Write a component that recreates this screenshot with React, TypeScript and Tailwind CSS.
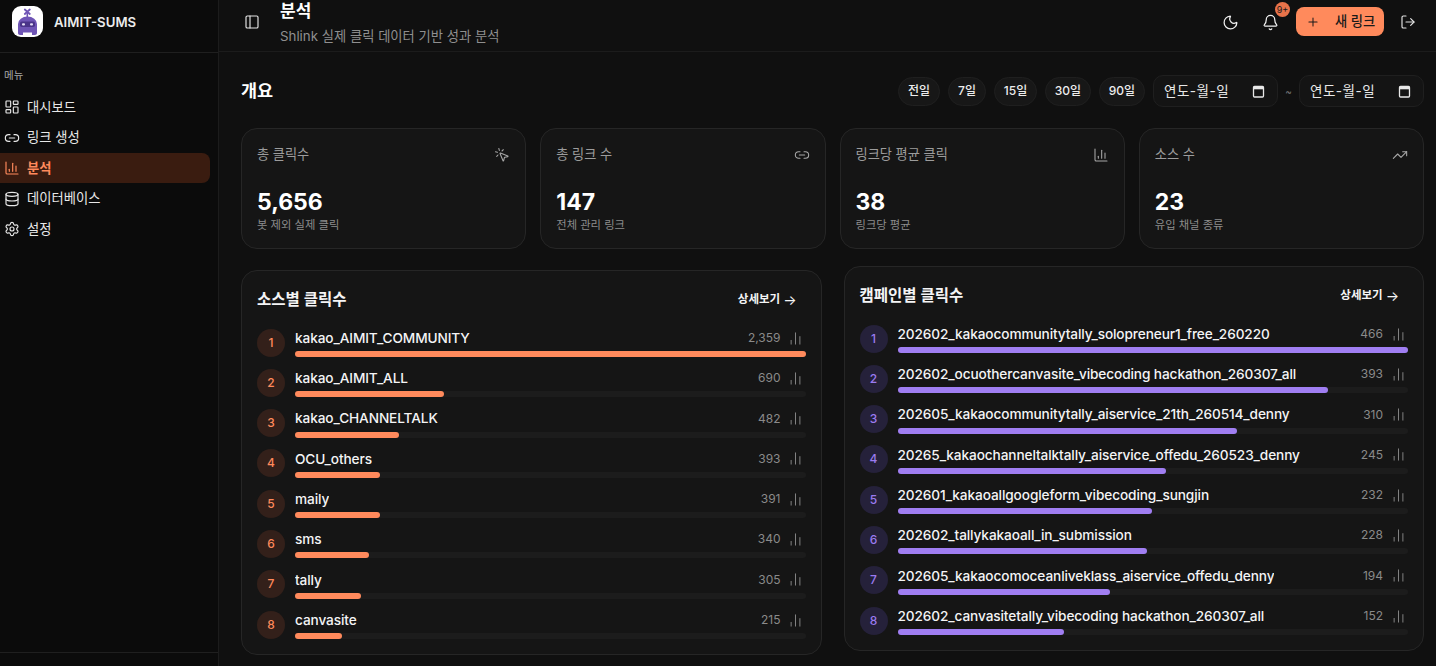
import React from "react";
import { LayoutDashboard, Link2, ChartColumn, Database, Settings, PanelLeft, Moon, Bell, Plus, LogOut, MousePointerClick, TrendingUp, ChartNoAxesColumn } from "lucide-react";

const nav = [
  { label: "대시보드", icon: LayoutDashboard },
  { label: "링크 생성", icon: Link2 },
  { label: "분석", icon: ChartColumn, active: true },
  { label: "데이터베이스", icon: Database },
  { label: "설정", icon: Settings },
];

const stats = [
  { title: "총 클릭수", value: "5,656", sub: "봇 제외 실제 클릭", icon: MousePointerClick },
  { title: "총 링크 수", value: "147", sub: "전체 관리 링크", icon: Link2 },
  { title: "링크당 평균 클릭", value: "38", sub: "링크당 평균", icon: ChartColumn },
  { title: "소스 수", value: "23", sub: "유입 채널 종류", icon: TrendingUp },
];

const sources: [string, number][] = [
  ["kakao_AIMIT_COMMUNITY", 2359],
  ["kakao_AIMIT_ALL", 690],
  ["kakao_CHANNELTALK", 482],
  ["OCU_others", 393],
  ["maily", 391],
  ["sms", 340],
  ["tally", 305],
  ["canvasite", 215],
];

const campaigns: [string, number][] = [
  ["202602_kakaocommunitytally_solopreneur1_free_260220", 466],
  ["202602_ocuothercanvasite_vibecoding hackathon_260307_all", 393],
  ["202605_kakaocommunitytally_aiservice_21th_260514_denny", 310],
  ["20265_kakaochanneltalktally_aiservice_offedu_260523_denny", 245],
  ["202601_kakaoallgoogleform_vibecoding_sungjin", 232],
  ["202602_tallykakaoall_in_submission", 228],
  ["202605_kakaocomoceanliveklass_aiservice_offedu_denny", 194],
  ["202602_canvasitetally_vibecoding hackathon_260307_all", 152],
];

function Logo() {
  return (
    <div className="w-[31px] h-[31px] rounded-[9px] bg-white shrink-0">
      <svg width="31" height="31" viewBox="0 0 31 31">
        <path d="M12.800 3.500l5 4.500M17.800 3.500l-5 4.500" stroke="#6f55b5" strokeWidth="1.800" strokeLinecap="round" />
        <rect x="14.500" y="7" width="1.600" height="4" fill="#6f55b5" />
        <path d="M6 18a9.500 7.500 0 0 1 19 0v9c0 1.200-.8 2-2 2h-3v-2.500h-9V29H8c-1.200 0-2-.8-2-2z" fill="#6f55b5" />
        <rect x="8" y="15.500" width="15" height="5.500" rx="1.800" fill="#4a3489" />
        <rect x="10" y="17.200" width="3" height="2.200" rx="1" fill="#e6e0f7" />
        <rect x="18" y="17.200" width="3" height="2.200" rx="1" fill="#e6e0f7" />
      </svg>
    </div>
  );
}

function RankList({ rows, accent }: { rows: [string, number][]; accent: "orange" | "purple" }) {
  const max = rows[0][1];
  const isOrange = accent === "orange";
  return (
    <div className="flex flex-col gap-[10.300px]">
      {rows.map(([name, v], i) => (
        <div key={name} className="flex items-center gap-[10px]">
          <div className={`w-[28px] h-[28px] rounded-full flex items-center justify-center text-[12px] font-medium shrink-0 mt-[1px] ${isOrange ? "bg-[#33201a] text-[#ff8a5c]" : "bg-[#25213a] text-[#9b7bf0]"}`}>
            {i + 1}
          </div>
          <div className="flex-1 min-w-0">
            <div className="flex items-center justify-between h-[22px] mb-[2px]">
              <span className="text-[13.650px] font-medium text-[#f4f4f5] truncate tracking-[-0.1px]">{name}</span>
              <span className="flex items-center gap-[7.500px] text-[12px] text-[#8a8a8a] shrink-0 mr-[2.500px]">
                {v.toLocaleString("en-US")}
                <ChartNoAxesColumn size={15} strokeWidth={1.5} className="text-[#8a8a8a]" />
              </span>
            </div>
            <div className="h-[6px] rounded-full bg-[#1c1c1c]">
              <div className={`h-full rounded-full ${isOrange ? "bg-[#ff8a5c]" : "bg-[#a07ef2]"}`} style={{ width: `${(v / max) * 100}%` }} />
            </div>
          </div>
        </div>
      ))}
    </div>
  );
}

function RankCard({ title, rows, accent, className }: { title: string; rows: [string, number][]; accent: "orange" | "purple"; className: string }) {
  return (
    <section className={`flex-1 h-[385px] rounded-[16px] border border-[#262626] bg-[#151515] px-[15px] pt-[17px] ${className}`}>
      <div className="flex items-center justify-between h-[24px] mb-[15px] pr-[9px]">
        <h2 className="text-[15.500px] font-semibold text-[#f4f4f5]">{title}</h2>
        <span className="text-[11.500px] font-semibold text-[#f4f4f5] flex items-center gap-[3px]">
          상세보기 <span className="text-[14px] leading-none font-normal">→</span>
        </span>
      </div>
      <RankList rows={rows} accent={accent} />
    </section>
  );
}

function DateBox({ w }: { w: string }) {
  return (
    <div className={`h-[32px] ${w} rounded-[10px] border border-[#1f1f1f] bg-[#141414] flex items-center justify-between pl-[10px] pr-[12px] text-[13.500px] text-[#e8e8e8]`}>
      <span className="tracking-[0.5px]">연도-월-일</span>
      <svg width="13" height="13" viewBox="0 0 13 13" fill="none">
        <rect x="1.500" y="1.500" width="10" height="10.500" rx="1" stroke="#e8e8e8" strokeWidth="1.300" />
        <rect x="1.500" y="1.500" width="10" height="2.800" fill="#e8e8e8" />
      </svg>
    </div>
  );
}

export default function App() {
  return (
    <div className="h-[666px] w-[1436px] overflow-hidden flex bg-[#101010] text-white" style={{ fontFamily: 'Inter, "Noto Sans CJK KR", sans-serif' }}>
      <aside className="w-[219px] shrink-0 h-full bg-[#0b0b0b] border-r border-[#1c1c1c] flex flex-col">
        <div className="h-[53px] shrink-0 border-b border-[#1f1f1f] flex items-center gap-[11px] pl-[12px] pb-[9px]">
          <Logo />
          <span className="text-[13.200px] font-semibold text-[#ececec] mt-[2px]">AIMIT-SUMS</span>
        </div>
        <div className="flex-1 pt-[16px]">
          <div className="pl-[4px] text-[10.500px] leading-[14px] text-[#a8a8a8] mb-[9px]">메뉴</div>
          <nav className="flex flex-col gap-[0.600px] pr-[8px]">
            {nav.map((n) => {
              const Icon = n.icon;
              return (
                <div key={n.label} className={`h-[30px] flex items-center gap-[7px] pl-[4px] rounded-r-[8px] text-[13.300px] ${n.active ? "bg-[#3a1c10] text-[#ff8a5c] font-semibold" : "text-[#e8e8e8]"}`}>
                  <Icon size={16} strokeWidth={1.75} />
                  <span className="mt-[1px]">{n.label}</span>
                </div>
              );
            })}
          </nav>
        </div>
        <div className="h-[14px] shrink-0 border-t border-[#1f1f1f]" />
      </aside>

      <div className="flex-1 min-w-0 flex flex-col">
        <header className="h-[52px] shrink-0 border-b border-[#1c1c1c] flex items-center pl-[25px] pr-[20px] pb-[7px]">
          <PanelLeft size={16} strokeWidth={1.75} className="text-[#e4e4e4] mr-[20px]" />
          <div className="mt-[1px]">
            <div className="text-[17px] leading-[22px] font-bold text-white">분석</div>
            <div className="text-[13.300px] leading-[18px] mt-[5px] text-[#8f8f8f]">Shlink 실제 클릭 데이터 기반 성과 분석</div>
          </div>
          <div className="ml-auto flex items-center">
            <Moon size={17} strokeWidth={1.75} className="text-[#f0f0f0] mr-[23px]" />
            <div className="relative mr-[17px]">
              <Bell size={17} strokeWidth={1.75} className="text-[#f0f0f0]" />
              <span className="absolute -top-[12px] -right-[11px] w-[15px] h-[15px] rounded-full bg-[#e8734a] text-[9px] leading-[15px] text-center text-[#1a1a1a]">9+</span>
            </div>
            <button className="h-[29px] w-[88px] -mt-[1px] rounded-[8px] bg-[#ff8a5c] text-[#1a1a1a] flex items-center pl-[10px] text-[13.300px] font-medium">
              <Plus size={14} strokeWidth={1.75} />
              <span className="ml-[15px]">새 링크</span>
            </button>
            <LogOut size={16} strokeWidth={1.75} className="text-[#e4e4e4] ml-[16px]" />
          </div>
        </header>

        <main className="flex-1 min-h-0 pl-[22px] pr-[12px] pt-[23px]">
          <div className="flex items-center justify-between h-[32px] mb-[21px]">
            <h1 className="text-[17.500px] font-bold text-white">개요</h1>
            <div className="flex items-center">
              {[["전일", "w-[42px]"], ["7일", "w-[38px]"], ["15일", "w-[43px]"], ["30일", "w-[46px]"], ["90일", "w-[46px]"]].map(([t, w]) => (
                <span key={t} className={`${w} h-[29px] mr-[8px] rounded-full bg-[#171717] border border-[#1f1f1f] flex items-center justify-center text-[12px] font-medium text-[#ececec]`}>{t}</span>
              ))}
              <DateBox w="w-[125px]" />
              <span className="w-[21px] text-center text-[10px] text-[#777]">~</span>
              <DateBox w="w-[125px]" />
            </div>
          </div>

          <div className="grid grid-cols-4 gap-[14px] mb-[21px]">
            {stats.map((s) => {
              const Icon = s.icon;
              return (
                <div key={s.title} className="h-[121px] rounded-[16px] border border-[#262626] bg-[#151515] px-[15px] pt-[16px]">
                  <div className="flex items-center justify-between h-[20px]">
                    <span className="text-[13.200px] text-[#9c9c9c]">{s.title}</span>
                    <Icon size={16} strokeWidth={1.6} className="text-[#a8a8a8]" />
                  </div>
                  <div className="mt-[21px] text-[23px] leading-[32px] font-bold text-white">{s.value}</div>
                  <div className="text-[11.300px] leading-[15px] text-[#8c8c8c]">{s.sub}</div>
                </div>
              );
            })}
          </div>

          <div className="flex gap-[22px] items-start">
            <RankCard title="소스별 클릭수" rows={sources} accent="orange" className="" />
            <RankCard title="캠페인별 클릭수" rows={campaigns} accent="purple" className="-mt-[4px]" />
          </div>
        </main>
      </div>
    </div>
  );
}
